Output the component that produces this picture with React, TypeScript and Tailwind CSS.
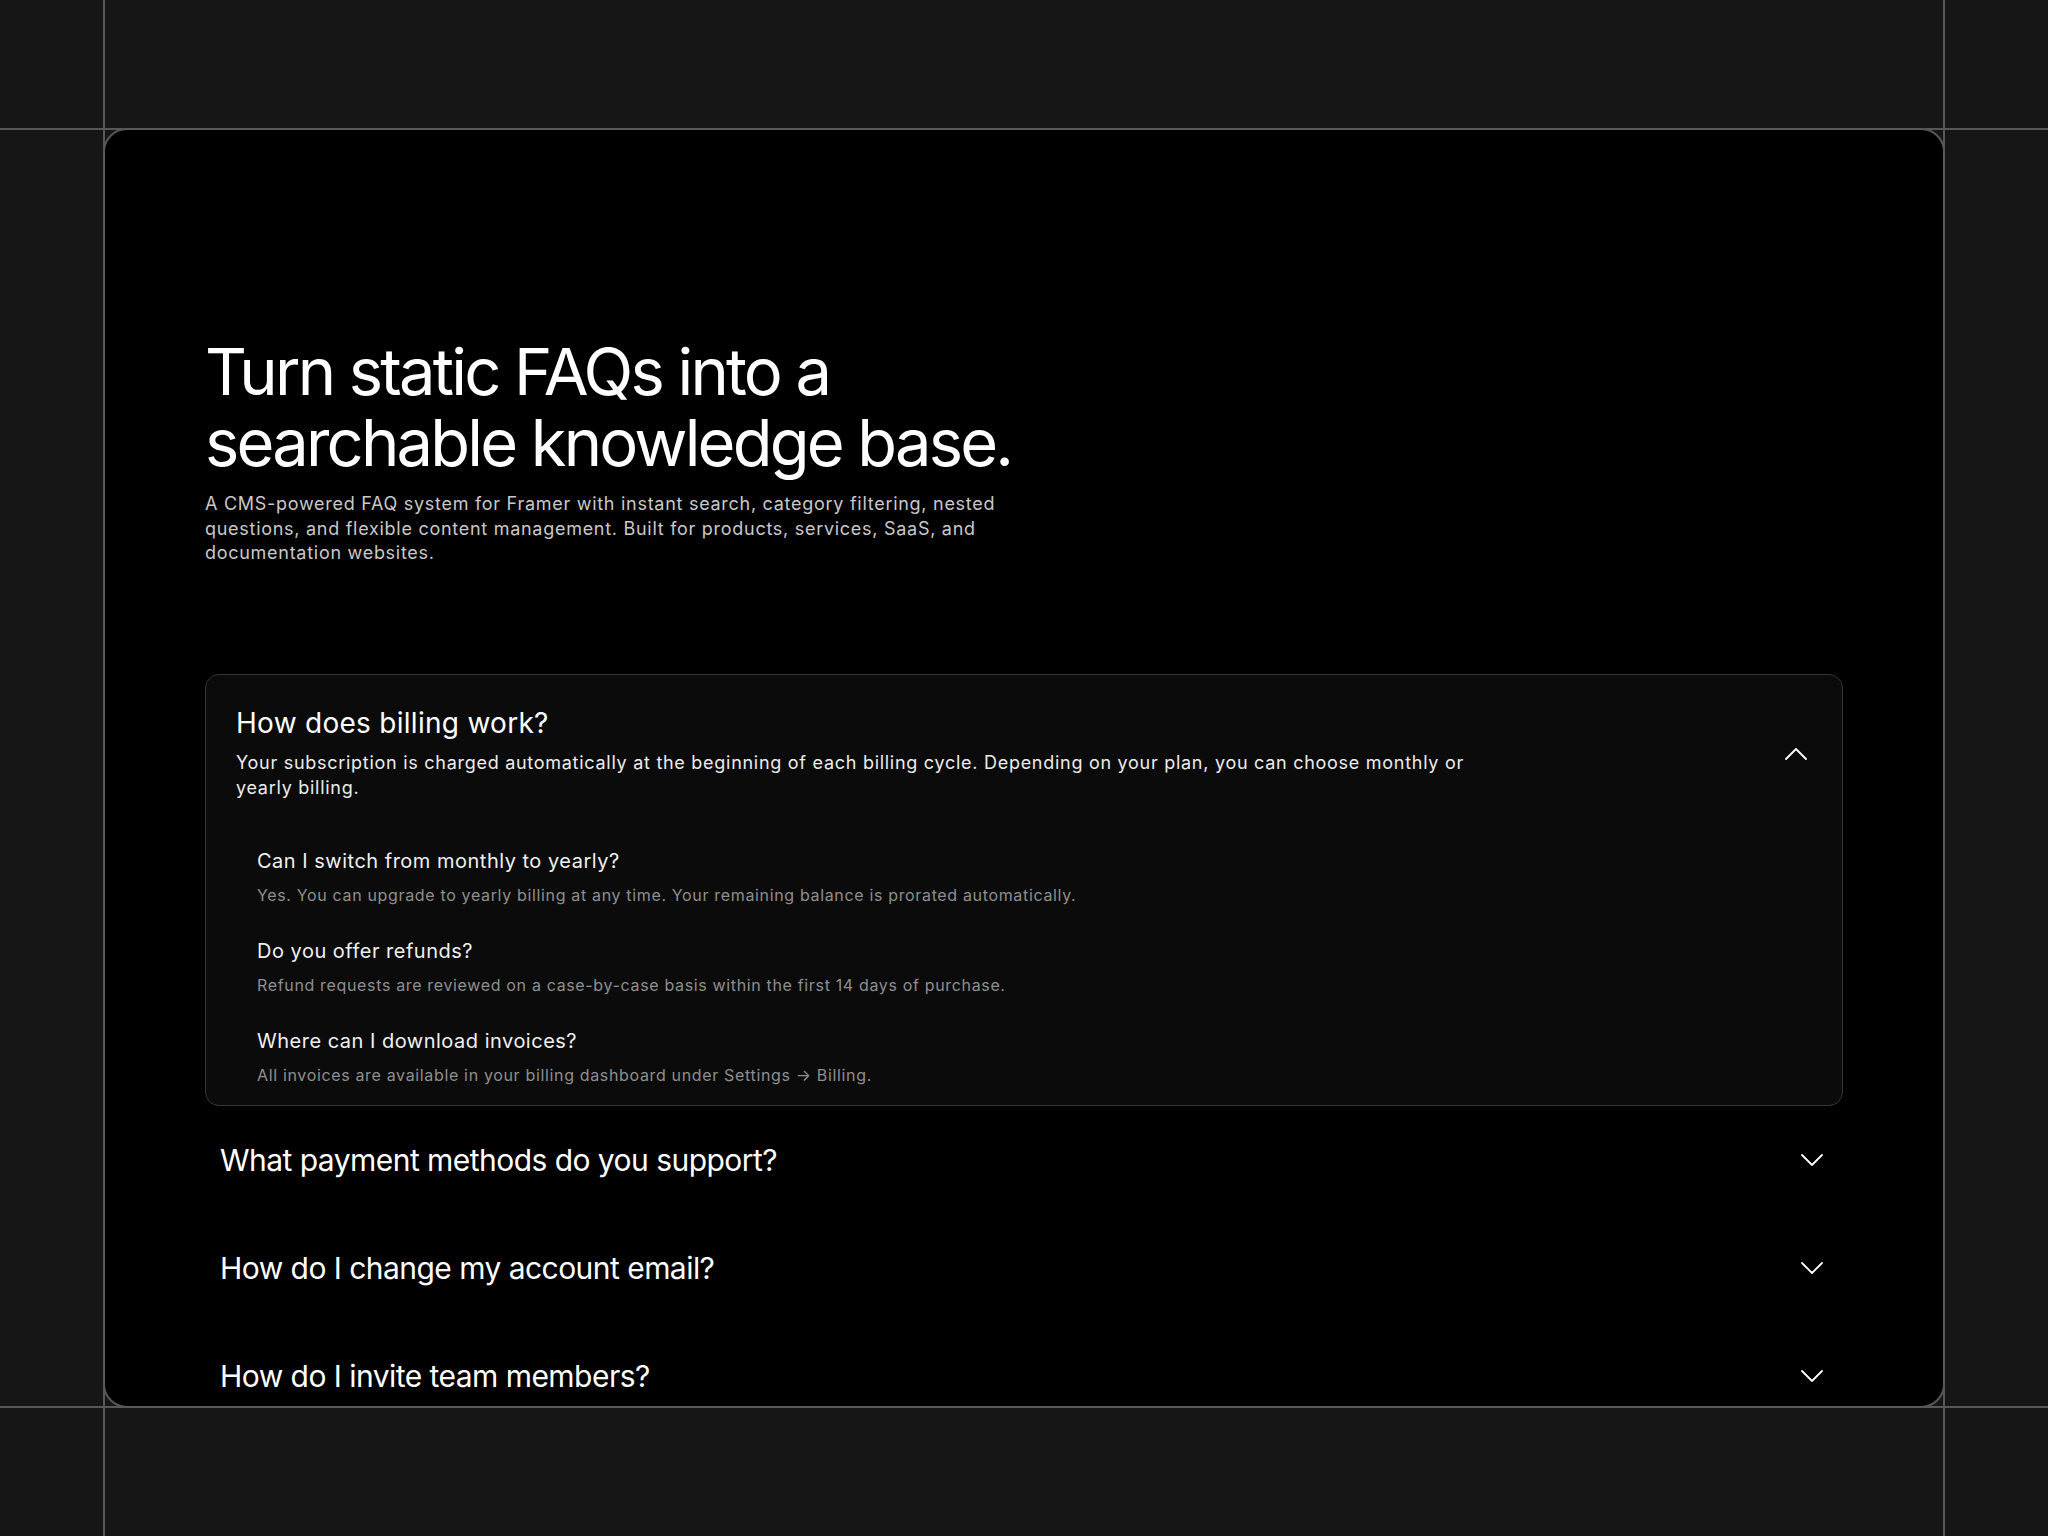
import React from "react";

interface SubQuestion {
  q: string;
  a: string;
}

const subQuestions: SubQuestion[] = [
  {
    q: "Can I switch from monthly to yearly?",
    a: "Yes. You can upgrade to yearly billing at any time. Your remaining balance is prorated automatically.",
  },
  {
    q: "Do you offer refunds?",
    a: "Refund requests are reviewed on a case-by-case basis within the first 14 days of purchase.",
  },
  {
    q: "Where can I download invoices?",
    a: "All invoices are available in your billing dashboard under Settings \u2192 Billing.",
  },
];

const collapsed = [
  "What payment methods do you support?",
  "How do I change my account email?",
  "How do I invite team members?",
];

function Chevron({ up = false }: { up?: boolean }) {
  return (
    <svg width="22" height="12" viewBox="0 0 22 12" fill="none" className="shrink-0">
      <path
        d={up ? "M1 11L11 1l10 10" : "M1 1l10 10L21 1"}
        stroke="white"
        strokeWidth="1.8"
        strokeLinecap="round"
        strokeLinejoin="round"
      />
    </svg>
  );
}

export default function App() {
  return (
    <div className="relative min-h-[1536px] w-full overflow-hidden bg-[#161616] font-['Inter','Noto_Sans',sans-serif]">
      {/* guide lines */}
      <div className="absolute left-0 right-0 top-[128px] h-[2px] bg-[#585858]" />
      <div className="absolute left-0 right-0 top-[1406px] h-[2px] bg-[#585858]" />
      <div className="absolute bottom-0 top-0 left-[103px] w-[2px] bg-[#585858]" />
      <div className="absolute bottom-0 top-0 left-[1943px] w-[2px] bg-[#585858]" />

      <div className="relative px-[103px] pt-[128px]">
        <div className="h-[1280px] overflow-hidden rounded-[24px] border-2 border-[#585858] bg-black px-[100px] pt-[206px]">
          {/* Hero */}
          <h1 className="text-[65px] font-normal leading-[71px] tracking-[-0.043em] text-white">
            Turn static FAQs into a
            <br />
            searchable knowledge base.
          </h1>
          <p className="mt-[14px] max-w-[820px] text-[18px] leading-[24.5px] tracking-[0.04em] text-[#c9c9c9]">
            A CMS-powered FAQ system for Framer with instant search, category filtering, nested
            questions, and flexible content management. Built for products, services, SaaS, and
            documentation websites.
          </p>

          {/* Open item */}
          <div className="mt-[108px] rounded-[14px] border border-[#363636] bg-[#0b0b0b] px-[30px] pb-[19px] pt-[30px]">
            <div className="flex items-center justify-between">
              <div className="max-w-[1250px]">
                <h2 className="text-[28px] font-normal leading-[36px] tracking-[0.01em] text-white">
                  How does billing work?
                </h2>
                <p className="mt-[9px] text-[18px] leading-[25px] tracking-[0.04em] text-[#ececec]">
                  Your subscription is charged automatically at the beginning of each billing cycle.
                  Depending on your plan, you can choose monthly or yearly billing.
                </p>
              </div>
              <div className="mr-[5px] mt-[3px]">
                <Chevron up />
              </div>
            </div>

            <div className="mt-[47px] flex flex-col gap-[31px] pl-[21px]">
              {subQuestions.map((s) => (
                <div key={s.q}>
                  <h3 className="text-[20px] font-normal leading-[28px] tracking-[0.025em] text-[#f0f0f0]">
                    {s.q}
                  </h3>
                  <p className="mt-[9px] text-[16px] leading-[22px] tracking-[0.041em] text-[#8f8f8f]">
                    {s.a}
                  </p>
                </div>
              ))}
            </div>
          </div>

          {/* Collapsed items */}
          {collapsed.map((q) => (
            <div key={q} className="flex items-center justify-between py-[38px] pl-[15px] pr-[20px]">
              <h2 className="text-[30px] font-normal leading-[32px] tracking-[-0.018em] text-white">{q}</h2>
              <Chevron />
            </div>
          ))}
        </div>
      </div>
    </div>
  );
}
